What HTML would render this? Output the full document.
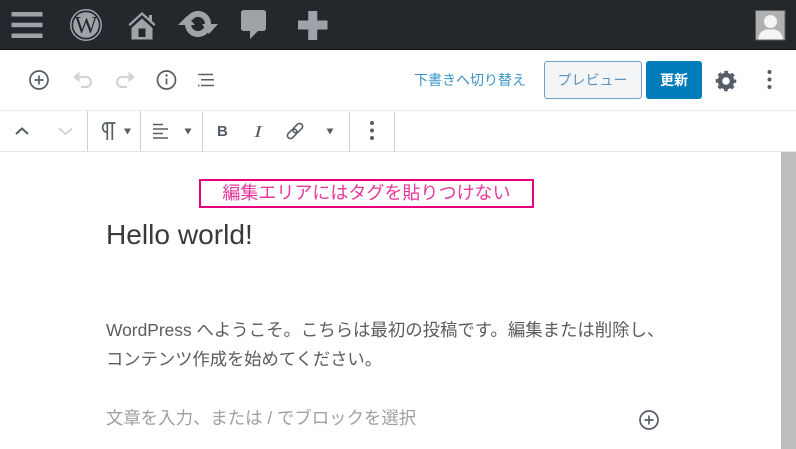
<!DOCTYPE html>
<html lang="ja"><head><meta charset="utf-8"><style>
html,body{margin:0;padding:0;background:#fff}
body{width:796px;height:449px;overflow:hidden;position:relative;font-family:"Liberation Sans","Noto Sans CJK JP",sans-serif}
.a{position:absolute;white-space:nowrap}
svg{position:absolute;left:0;top:0}
</style></head><body>
<div class="a" style="left:0;top:0;width:796px;height:49px;background:#23282d;border-bottom:1px solid #111"></div>
<div class="a" style="left:0;top:110px;width:796px;height:1px;background:#ececec"></div>
<div class="a" style="left:0;top:151px;width:796px;height:1px;background:#e4e4e4"></div>
<div class="a" style="left:781px;top:152px;width:15px;height:297px;background:#bdbdbd"></div>
<svg width="796" height="449" viewBox="0 0 796 449">
<g fill="#9ea3a8">
<rect x="11.500" y="12" width="31" height="4.500"/><rect x="11.500" y="22.700" width="31" height="4.500"/><rect x="11.500" y="33.500" width="31" height="4.500"/>
<path d="M142 12l7 6.300v-3.300h3v6l3.500 3.200-1.500 1.800-12-11-12 11-1.500-1.800z"/>
<path fill-rule="evenodd" d="M142 18.500l10.500 9.500v11.500h-21v-11.500zM138.500 28.500v8.500h7v-8.500z"/>
<path d="M241 13q0-3 3-3h19q3 0 3 3v15q0 3-3 3h-5l-8 8v-8h-6q-3 0-3-3z"/>
<rect x="298" y="20.500" width="29.500" height="9"/><rect x="308.200" y="11" width="9" height="29"/>
<path d="M202 24h16l-9 10zM178 25h17l-8-9z"/>
</g>
<path d="M189.300 19A10 10 0 0 1 208 24M188 24A10 10 0 0 0 206.700 29" fill="none" stroke="#9ea3a8" stroke-width="6"/>
<circle cx="86" cy="25" r="15.200" fill="none" stroke="#9ea3a8" stroke-width="1.500"/>
<circle cx="86" cy="25" r="12.800" fill="#9ea3a8"/>
<text x="86" y="33" text-anchor="middle" font-family="Liberation Serif" font-size="24" fill="#23282d">W</text>
<rect x="755.500" y="10.500" width="29.500" height="29.500" fill="#b0b0b0" stroke="#5c5c5c" stroke-width="1"/>
<circle cx="770.500" cy="21.500" r="6.500" fill="#f4f4f4"/>
<path d="M758 39.500q1-8 8-10h9q7 2 8 10z" fill="#f4f4f4"/>

<g fill="none" stroke="#555d66" stroke-width="1.700">
<circle cx="39" cy="80" r="9"/><path d="M34.500 80h9M39 75.500v9"/>
<circle cx="166.500" cy="80" r="9"/><path d="M166.500 78.500v6"/>
<path d="M198 74.500h4" stroke-width="1.300"/><path d="M201 74.500h12M201 79.800h13M201 85.500h13M198 85.500h1.500" stroke-width="1.500"/>
<path d="M16 134l6-5.500 6 5.500" stroke-width="2"/>
<path d="M153 124.500h10M153 129h15M153 133.500h10M153 138h15" stroke-width="1.600"/>
<path d="M107.300 123v17M112.300 123v17M115.500 123h-10a5 5 0 0 0 0 9h2" stroke-width="1.700"/>
<g transform="rotate(-45 295 131)" stroke-width="1.600"><rect x="285.500" y="128" width="11" height="6" rx="3"/><rect x="293.500" y="128" width="11" height="6" rx="3"/></g>
</g>
<circle cx="166.500" cy="75.500" r="1.200" fill="#555d66"/>
<g fill="none" stroke="#d0d3d6" stroke-width="2.200">
<path d="M78 77h8a5 5 0 0 1 0 10h-5"/>
<path d="M130 77h-8a5 5 0 0 0 0 10h5"/>
<path d="M59 128.500l6.500 5.500 6.500-5.500" stroke-width="2"/>
</g>
<path d="M73 77l6.500-5.500v11zM135 77l-6.500-5.500v11z" fill="#d0d3d6"/>
<g fill="#555d66">
<circle cx="769.500" cy="72" r="2"/><circle cx="769.500" cy="79.500" r="2"/><circle cx="769.500" cy="87" r="2"/>
<circle cx="372" cy="123" r="2"/><circle cx="372" cy="130.500" r="2"/><circle cx="372" cy="138" r="2"/>
<path d="M124 128.500h7l-3.500 6zM184.500 128.500h7l-3.500 6zM326.500 128.500h7l-3.500 6z"/>
</g>
<circle cx="726" cy="81" r="6" fill="none" stroke="#555d66" stroke-width="4.500"/>
<circle cx="726" cy="81" r="8.800" fill="none" stroke="#555d66" stroke-width="3" stroke-dasharray="3.600 3.310" stroke-dashoffset="1.800"/>
<circle cx="649" cy="420" r="9" fill="none" stroke="#555d66" stroke-width="1.700"/>
<path d="M644.500 420h9M649 415.500v9" fill="none" stroke="#555d66" stroke-width="1.700"/>
<g fill="#cdd0d2"><rect x="87" y="111" width="1" height="40"/><rect x="140" y="111" width="1" height="40"/><rect x="202" y="111" width="1" height="40"/><rect x="349" y="111" width="1" height="40"/><rect x="394" y="111" width="1" height="40"/></g>
</svg>
<div class="a" style="left:217px;top:123px;font:bold 15px/17px 'Liberation Sans';color:#555d66">B</div>
<div class="a" style="left:254px;top:122px;font:italic 17px/19px 'Liberation Serif';color:#555d66;transform:scaleX(1.4);transform-origin:0 0">I</div>

<div class="a" style="left:414px;top:71px;font-size:14px;line-height:18px;color:#3a94c9">下書きへ切り替え</div>
<div class="a" style="left:543.500px;top:61px;width:96px;height:36px;border:1px solid #6fa3c4;border-radius:3px;background:#f3f5f6;text-align:center;font-size:14px;line-height:36px;color:#5a94bb">プレビュー</div>
<div class="a" style="left:646px;top:61px;width:56px;height:38px;border-radius:3px;background:#007cba;text-align:center;font-size:14px;line-height:38px;color:#fff;font-weight:bold">更新</div>

<div class="a" style="left:199px;top:179px;width:331px;height:25px;border:2px solid #e6007e;text-align:center;font-size:18px;line-height:25px;color:#e8389a">編集エリアにはタグを貼りつけない</div>
<div class="a" style="left:106px;top:218px;font-size:28.100px;line-height:34px;color:#3a3a3a">Hello world!</div>
<div class="a" style="left:106px;top:316px;font-size:17.400px;line-height:29px;color:#5c5c5c">WordPress へようこそ。こちらは最初の投稿です。編集または削除し、<br><span style="font-size:17.300px">コンテンツ作成を始めてください。</span></div>
<div class="a" style="left:106px;top:404px;font-size:17.400px;line-height:28px;color:#a0a0a0">文章を入力、または / でブロックを選択</div>
</body></html>
